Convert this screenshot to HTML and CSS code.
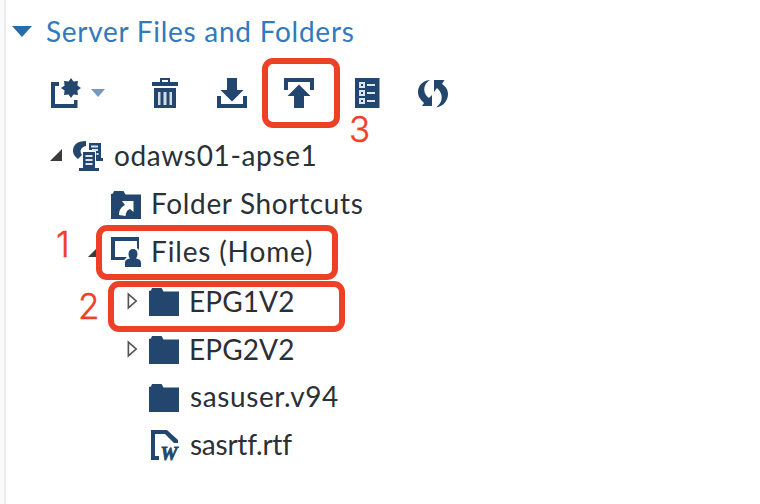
FILE: index.html
```
<!DOCTYPE html>
<html lang="en">
<head>
<meta charset="utf-8">
<title>Server Files and Folders</title>
<link rel="stylesheet" href="styles.css">
</head>
<body>
<svg width="0" height="0" class="defs">
  <symbol id="folder" viewBox="0 0 30 30"><path d="M0 5 2 4.500 3 2H12.500L14.500 5.500H30V30H0Z"/></symbol>
</svg>
<main class="panel">
  <header class="heading">
    <svg class="disclosure" viewBox="0 0 20 11"><path d="M0 0H20L10 11Z"/></svg>
    <h1 class="title">Server Files and Folders</h1>
  </header>
  <div class="toolbar">
    <div class="tool new">
      <svg class="icon" viewBox="0 0 30 30"><path d="M0 4H8V8H4V26H23V22H26.500V30H0Z"/><path d="M20 0 22.400 3.500 27 3 26.400 7.600 30 10 26.400 12.400 27 17 22.400 16.500 20 20 17.600 16.500 13 17 13.600 12.400 10 10 13.600 7.600 13 3 17.600 3.500Z"/></svg>
      <svg class="caret" viewBox="0 0 14 8"><path d="M0 0H14L7 8Z"/></svg>
    </div>
    <svg class="icon tool trash" viewBox="0 0 30 30"><path d="M10 4V0H20V4H28V8H2V4ZM12 2V4H18V2Z" fill-rule="evenodd"/><path d="M4 10H26V30H4Z"/><path class="slot" d="M8 14H10.500V27H8ZM13.500 14H16.500V27H13.500ZM19.500 14H22V27H19.500Z"/></svg>
    <svg class="icon tool download" viewBox="0 0 30 30"><path d="M10 0H20V12H26.500L15 23.500 3.500 12H10ZM0 18H4V26H26V18H30V30H0Z"/></svg>
    <svg class="icon tool upload" viewBox="0 0 30 30"><path d="M0 0H30V12H26V4H4V12H0ZM15 6.500 26.500 18H20V30H10V18H3.500Z"/></svg>
    <svg class="icon tool list" viewBox="0 0 30 30"><path d="M3 0H27.500V30H3Z"/><path class="marks" d="M8 5H12V9H8ZM8 13H12V17H8ZM8 21H12V25H8ZM15 7H23M15 15H23M15 23H23"/></svg>
    <svg class="icon tool refresh" viewBox="0 0 30 30"><path d="M12 2C3 3 0 9 0 14 0 19 3 22 6 25L4 28H14V17L11 20C5 16 4 7 12 2Z"/><path d="M18 29.500C27 28 30 21 30 16 30 11 27 8 24 6L26.500 2H16V14L19 10C25 15 26 24 18 29.500Z"/></svg>
  </div>
  <ul class="tree">
    <li class="row level-1">
      <svg class="arrow" viewBox="0 0 12 12"><path d="M12 0V12H0Z"/></svg>
      <svg class="icon" viewBox="0 0 30 30"><path d="M13 0C4 0 0 4 0 10 0 13 2 16 5 18L9 14C6 10 8 6 13 5ZM16 2H28V17H30V20H23V9H16Z"/><path d="M10 11H22V27H26V30H6V27H10Z"/><path class="detail" d="M18 5.500H25M19 9H25M23.500 13H25.500M12.500 15H19.500M12.500 19H19.500M12.500 23H19.500"/></svg>
      <span class="name server">odaws01-apse1</span>
    </li>
    <li class="row level-2">
      <span class="arrow"></span>
      <svg class="icon" viewBox="0 0 30 30"><use href="#folder"/><path class="cutout" d="M11 12H22.500V23L19 20C16 21 15 23 14.500 27L8 26C8 21 10 18 14 16Z"/></svg>
      <span class="name shortcuts">Folder Shortcuts</span>
    </li>
    <li class="row level-2">
      <svg class="arrow" viewBox="0 0 12 12"><path d="M12 0V12H0Z"/></svg>
      <svg class="icon home-icon" viewBox="0 0 30 30"><path d="M0 0H28V13L26 11V4H4V20H16L13 23H0Z"/><path d="M22 12C25 12 26.500 14 26.500 17 26.500 19 25.500 20.500 25 21.500 29 22 30 24 30 26V30H14V26C14 24 15 22 19 21.500 18 20 17.500 19 17.500 17 17.500 14 19 12 22 12Z"/></svg>
      <span class="name home">Files (Home)</span>
    </li>
    <li class="row level-3">
      <svg class="arrow closed" viewBox="0 0 12 18"><path d="M1.500 1.500V16.500L10 9Z"/></svg>
      <svg class="icon"><use href="#folder"/></svg>
      <span class="name epg">EPG1V2</span>
    </li>
    <li class="row level-3">
      <svg class="arrow closed" viewBox="0 0 12 18"><path d="M1.500 1.500V16.500L10 9Z"/></svg>
      <svg class="icon"><use href="#folder"/></svg>
      <span class="name epg">EPG2V2</span>
    </li>
    <li class="row level-3">
      <span class="arrow"></span>
      <svg class="icon"><use href="#folder"/></svg>
      <span class="name sasuser">sasuser.v94</span>
    </li>
    <li class="row level-3">
      <span class="arrow"></span>
      <svg class="icon" viewBox="0 0 30 30"><path d="M2 0H18L29 10V13H25L16 4H6V26H10V30H2Z"/><text class="word" x="11.500" y="29.500">W</text></svg>
      <span class="name sasrtf">sasrtf.rtf</span>
    </li>
  </ul>
</main>
<div class="frame frame-home"></div>
<div class="frame frame-folder"></div>
<div class="frame frame-upload"></div>
<span class="step step-1">1</span>
<span class="step step-2">2</span>
<span class="step step-3">3</span>
</body>
</html>
```

FILE: styles.css
```
* { box-sizing: border-box; }
body {
  margin: 0;
  height: 504px;
  padding-left: 4px;
  overflow: hidden;
  position: relative;
  background: #fafafa;
  font-family: Lato, "Liberation Sans", sans-serif;
}
.defs { position: absolute; }
svg { display: block; fill: #22466e; flex: none; overflow: visible; }
.panel {
  height: 504px;
  border-left: 2px solid #ebebf0;
  background: #fff;
}
.heading { display: flex; align-items: center; height: 63px; padding-left: 6px; }
.disclosure { width: 20px; height: 11px; fill: #2b6ca6; }
.title {
  margin: 0 0 2px 14px;
  font-size: 28px;
  line-height: 40px;
  font-weight: 400;
  color: #317abb;
  letter-spacing: .73px;
  white-space: nowrap;
}
.toolbar { display: flex; align-items: center; height: 60px; padding-left: 45px; }
.icon { width: 30px; height: 30px; }
.new { display: flex; align-items: center; gap: 10px; margin-right: 45px; }
.caret { width: 14px; height: 8px; fill: #7698bc; }
.trash { margin-right: 37px; }
.download { margin-right: 37px; }
.upload { margin-right: 38px; }
.list { margin-right: 36px; }
.slot { fill: #d3dbe4; }
.marks { fill: none; stroke: #dce5ee; stroke-width: 2; }
.tree { margin: 9px 0 0; padding: 0; list-style: none; }
.row { display: flex; align-items: center; height: 48.200px; }
.level-1 { padding-left: 44px; }
.level-2 { padding-left: 82px; }
.level-3 { padding-left: 120px; }
.arrow { flex: none; width: 12px; height: 12px; margin-right: 11px; fill: #3b3b3b; }
.level-1 .arrow, .level-2 .arrow { margin-bottom: 2px; }
.closed { height: 18px; padding-left: 1px; fill: #fff; stroke: #555; stroke-width: 1.800; }
.name {
  margin: 0 0 2px 10px;
  font-size: 28px;
  line-height: 40px;
  color: #2b3036;
  white-space: nowrap;
}
.server { margin-left: 11px; letter-spacing: .65px; }
.shortcuts { letter-spacing: .65px; }
.home { letter-spacing: .85px; }
.epg { margin-bottom: 0; letter-spacing: .1px; }
.sasuser { margin-left: 11px; letter-spacing: .6px; }
.sasrtf { margin-left: 11px; letter-spacing: -.25px; }
.detail { fill: none; stroke: #dce5ee; stroke-width: 2; }
.cutout { fill: #fff; }
.word { font: italic bold 19px "Liberation Serif", serif; stroke: #22466e; stroke-width: .8px; }
.frame { position: absolute; border: 6px solid #ed4027; border-radius: 11px; }
.frame-upload { left: 262px; top: 58px; width: 78px; height: 69.500px; }
.frame-home { left: 96px; top: 225px; width: 242px; height: 55px; }
.frame-folder { left: 108px; top: 281px; width: 237px; height: 51px; }
.step {
  position: absolute;
  font: 300 35px/40px Inter, sans-serif;
  color: #ed4027;
  -webkit-text-stroke: .4px #ed4027;
}
.step-1 { left: 56px; top: 224px; }
.step-2 { left: 78px; top: 286px; }
.step-3 { left: 349px; top: 109px; }
```
